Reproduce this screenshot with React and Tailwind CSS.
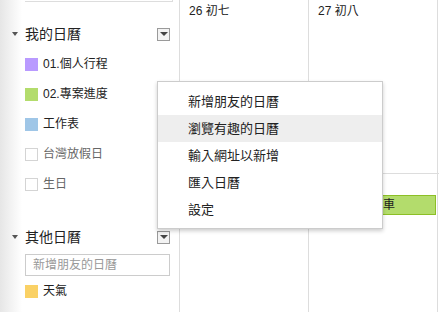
import React from 'react'

const font = { fontFamily: '"Liberation Sans", Arial, "Noto Sans CJK TC", sans-serif' }

const DropBox = () => (
  <div className="ml-auto w-[13px] h-[13px] border border-[#9a9a9a] bg-[#f3f3f3] flex items-center justify-center">
    <div className="w-0 h-0 border-l-[4px] border-r-[4px] border-t-[4px] border-l-transparent border-r-transparent border-t-[#444]" />
  </div>
)

const Header = ({ title }) => (
  <div className="flex items-center h-[30px] pl-[12px] pr-[9px]">
    <div className="w-0 h-0 border-l-[3.5px] border-r-[3.5px] border-t-[4px] border-l-transparent border-r-transparent border-t-[#555]" />
    <span className="ml-[7px] text-[14px] text-[#222]">{title}</span>
    <DropBox />
  </div>
)

const CalItem = ({ color, label, off }) => (
  <div className="flex items-center h-[30px] pl-[25px]">
    <div
      className={
        off
          ? 'w-[13px] h-[13px] border border-[#d4d4d4] bg-white'
          : 'w-[13px] h-[13px]'
      }
      style={off ? undefined : { backgroundColor: color }}
    />
    <span className={off ? 'ml-[5px] text-[12px] text-[#666]' : 'ml-[5px] text-[12px] text-[#222]'}>
      {label}
    </span>
  </div>
)

const menuItems = ['新增朋友的日曆', '瀏覽有趣的日曆', '輸入網址以新增', '匯入日曆', '設定']

export default function App() {
  return (
    <div className="relative w-[439px] h-[312px] overflow-hidden bg-white flex" style={font}>
      {/* sidebar */}
      <div className="w-[179px] shrink-0 bg-[linear-gradient(to_right,#e6e6e6,#ffffff_22px)]">
        <div className="ml-[25px] w-[148px] h-[2px] border-b border-r border-[#dddddd]" />
        <div className="h-[17px]" />
        <Header title="我的日曆" />
        <CalItem color="#b99aff" label="01.個人行程" />
        <CalItem color="#b3dc6c" label="02.專案進度" />
        <CalItem color="#9fc6e7" label="工作表" />
        <CalItem off label="台灣放假日" />
        <CalItem off label="生日" />
        <div className="h-[23px]" />
        <Header title="其他日曆" />
        <div className="ml-[25px] mt-[2px] w-[145px] h-[22px] border border-[#cccccc] flex items-center pl-[7px] text-[12px] text-[#999]">
          新增朋友的日曆
        </div>
        <CalItem color="#fad165" label="天氣" />
      </div>

      {/* calendar grid */}
      <div className="flex-1 grid grid-cols-[129px_129px_1fr] grid-rows-[173px_1fr]">
        <div className="border-l border-[#dddddd] pl-[9px] pt-[2px] text-[12px] text-[#222]">26 初七</div>
        <div className="border-l border-[#dddddd] pl-[9px] pt-[2px] text-[12px] text-[#222]">27 初八</div>
        <div className="border-l border-[#dddddd]" />
        <div className="border-l border-t border-[#dddddd]" />
        <div className="border-l border-t border-[#dddddd] pt-[21px] pr-[1px]">
          <div className="h-[20px] border border-[#8cbf26] bg-[#b3dc6c] pl-[61px] text-[12px] leading-[18px] text-[#1d1d1d]">
            修車
          </div>
        </div>
        <div className="border-l border-t border-[#dddddd]" />
      </div>

      {/* dropdown menu */}
      <div className="absolute left-[157px] top-[81px] w-[226px] h-[148px] bg-white border border-[#cccccc] shadow-[0_2px_4px_rgba(0,0,0,0.2)] pt-[6px]">
        {menuItems.map((m, i) => (
          <div
            key={m}
            className={
              i === 1
                ? 'h-[27px] flex items-center pl-[30px] text-[13px] text-[#222] bg-[#eeeeee]'
                : 'h-[27px] flex items-center pl-[30px] text-[13px] text-[#222]'
            }
          >
            {m}
          </div>
        ))}
      </div>
    </div>
  )
}
